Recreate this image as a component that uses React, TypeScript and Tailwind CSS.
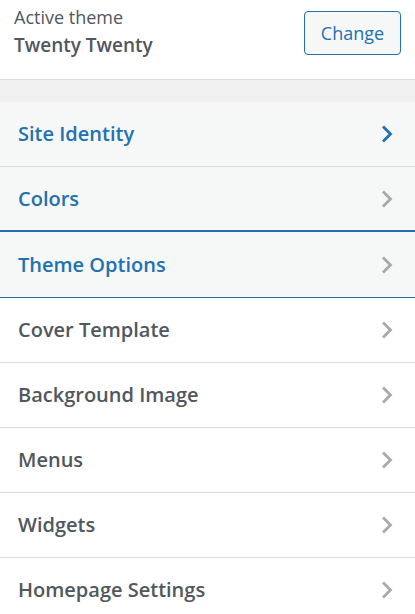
import React from 'react';

type Section = {
  title: string;
  tone: 'active' | 'muted' | 'plain';
};

const sections: Section[] = [
  { title: 'Site Identity', tone: 'active' },
  { title: 'Colors', tone: 'muted' },
  { title: 'Theme Options', tone: 'muted' },
  { title: 'Cover Template', tone: 'plain' },
  { title: 'Background Image', tone: 'plain' },
  { title: 'Menus', tone: 'plain' },
  { title: 'Widgets', tone: 'plain' },
  { title: 'Homepage Settings', tone: 'plain' },
];

const Chevron: React.FC<{ color: string }> = ({ color }) => (
  <svg width="12" height="20" viewBox="0 0 12 20" fill="none" className="shrink-0">
    <path d="M2 2.5 L9.5 10 L2 17.5" stroke={color} strokeWidth="2.8" />
  </svg>
);

const App: React.FC = () => {
  return (
    <div className="w-[415px] h-[614px] overflow-hidden bg-white font-['Open_Sans','Noto_Sans',sans-serif]">
      {/* Active theme header */}
      <div className="flex items-start justify-between h-[80px] pl-[14px] pr-[14px] pt-[11px] border-b border-[#dcdcde]">
        <div className="flex flex-col">
          <span className="text-[18px] leading-[20px] text-[#50575e] mt-[-4px]">Active theme</span>
          <span className="text-[19px] leading-[26px] font-semibold text-[#50575e] mt-[5px]">Twenty Twenty</span>
        </div>
        <button className="h-[44px] w-[97px] rounded-[4px] border border-[#2271b1] bg-[#f6f7f7] text-[18px] text-[#2271b1]">
          Change
        </button>
      </div>

      <div className="h-[22px] bg-[#f0f0f1]" />

      {sections.map((s) => {
        const blueText = s.tone !== 'plain';
        let rowCls = 'h-[65px] border-b border-[#dcdcde]';
        if (s.title === 'Colors') rowCls = 'h-[63px]';
        if (s.title === 'Theme Options') rowCls = 'h-[68px] border-t-2 border-b border-[#2271b1]';
        return (
          <div
            key={s.title}
            className={`flex items-center justify-between pl-[18px] pr-[22px] ${rowCls} ${
              s.tone === 'plain' ? 'bg-white' : 'bg-[#f6f7f7]'
            }`}
          >
            <span
              className={`text-[20px] font-semibold ${blueText ? 'text-[#2271b1]' : 'text-[#50575e]'}`}
            >
              {s.title}
            </span>
            <Chevron color={s.tone === 'active' ? '#2271b1' : '#a7aaad'} />
          </div>
        );
      })}
    </div>
  );
};

export default App;
